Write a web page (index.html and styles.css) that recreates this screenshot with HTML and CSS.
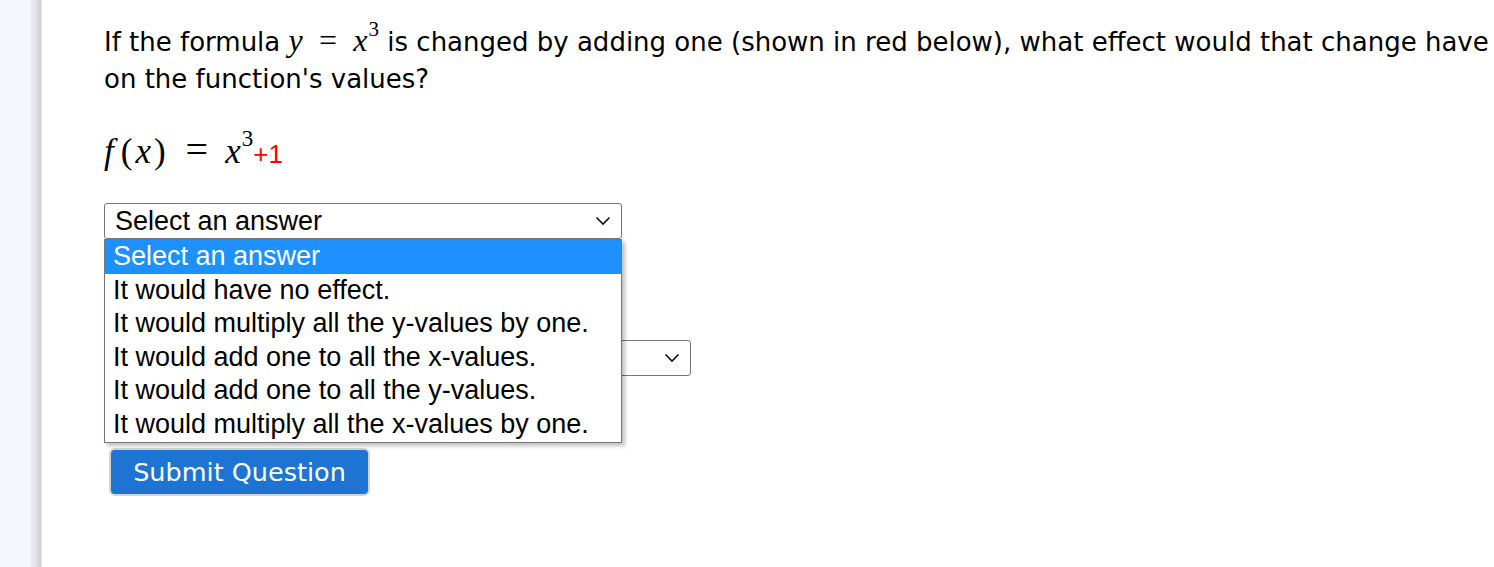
FILE: index.html
```html
<!DOCTYPE html>
<html lang="en">
<head>
    <meta charset="UTF-8">
    <meta name="viewport" content="width=device-width, initial-scale=1.0">
    <title>Question</title>
    <link rel="stylesheet" href="styles.css">
</head>
<body>
    <div class="page">
        <div class="sidebar"></div>
        <div class="main">
            <p class="question">
                <span class="line">If the formula <span class="math">y</span> <span class="op">=</span> <span class="math">x</span><sup class="sup">3</sup> is changed by adding one (shown in red below), what effect would that change have</span>
                <span class="line">on the function's values?</span>
            </p>
            <div class="formula"><span class="math fn">f</span><span class="paren">(</span><span class="math">x</span><span class="paren">)</span><span class="op eq">=</span><span class="math">x</span><sup class="sup">3</sup><span class="red">+1</span></div>

            <div class="select-wrap">
                <div class="select first">
                    <span>Select an answer</span>
                    <svg class="chev" width="16" height="10" viewBox="0 0 16 10"><path d="M1.5 1.5 L8 8 L14.5 1.5" fill="none" stroke="#111" stroke-width="1.6"/></svg>
                </div>
                <ul class="popup">
                    <li class="active">Select an answer</li>
                    <li>It would have no effect.</li>
                    <li>It would multiply all the y-values by one.</li>
                    <li>It would add one to all the x-values.</li>
                    <li>It would add one to all the y-values.</li>
                    <li>It would multiply all the x-values by one.</li>
                </ul>
            </div>

            <p class="hidden-line">How does the graph change?</p>
            <div class="select second">
                <span>Select an answer</span>
                <svg class="chev" width="16" height="10" viewBox="0 0 16 10"><path d="M1.5 1.5 L8 8 L14.5 1.5" fill="none" stroke="#111" stroke-width="1.6"/></svg>
            </div>

            <button class="submit">Submit Question</button>
        </div>
    </div>
</body>
</html>
```

FILE: styles.css
```css
body {
    margin: 0;
    background-color: white;
    color: black;
    font-family: "DejaVu Sans", Tahoma, sans-serif;
    overflow: hidden;
}
.page {
    display: flex;
    min-height: 567px;
}
.sidebar {
    width: 42px;
    flex-shrink: 0;
    background: linear-gradient(to right, #f5f6fd 0, #f5f6fd 30px, #ededf1 31px, #dedee2 37px, #cdcdd1 41px, #ffffff 42px);
}
.main {
    padding: 22px 0 0 62px;
    flex: 1;
}
.question {
    margin: 0;
    font-size: 26px;
    line-height: 37px;
}
.question .line {
    display: block;
    white-space: nowrap;
}
.math {
    font-family: "Liberation Serif", "DejaVu Serif", serif;
    font-style: italic;
    font-size: 32px;
}
.op {
    font-family: "Liberation Serif", serif;
    font-size: 32px;
    margin: 0 8px;
}
.sup {
    font-family: "Liberation Serif", serif;
    font-size: 21px;
    line-height: 0;
    vertical-align: 15px;
    margin-left: 1px;
}
.formula {
    margin-top: 31px;
    height: 42px;
    line-height: 42px;
    white-space: nowrap;
}
.formula .math,
.formula .paren,
.formula .op {
    font-size: 35px;
}
.formula .fn {
    margin-right: 4px;
}
.formula .paren {
    font-family: "Liberation Serif", serif;
    margin: 0 3px;
}
.formula .eq {
    font-size: 40px;
    margin: 0 17px 0 17px;
}
.formula .sup {
    font-size: 23px;
    vertical-align: 17px;
}
.red {
    color: #ff0000;
    font-family: "Liberation Sans", Arial, sans-serif;
    font-size: 26px;
}
.select-wrap {
    position: relative;
    margin-top: 32px;
    width: 518px;
}
.select {
    box-sizing: border-box;
    height: 36px;
    border: 1px solid #767676;
    border-radius: 3px;
    display: flex;
    align-items: center;
    justify-content: space-between;
    padding: 0 10px 0 10px;
    font-family: "Liberation Sans", Arial, sans-serif;
    font-size: 27px;
    background: white;
}
.first {
    width: 518px;
}
.second {
    width: 587px;
    margin-top: 36px;
}
.popup {
    position: absolute;
    top: 36px;
    left: 0;
    width: 518px;
    box-sizing: border-box;
    margin: 0;
    padding: 0;
    list-style: none;
    border: 1px solid #767676;
    background: white;
    box-shadow: 3px 3px 4px rgba(0, 0, 0, 0.25);
    font-family: "Liberation Sans", Arial, sans-serif;
    font-size: 27px;
    z-index: 2;
}
.popup li {
    height: 33.6px;
    line-height: 33px;
    padding-left: 8px;
    white-space: nowrap;
}
.popup .active {
    background-color: #1e90ff;
    color: white;
}
.hidden-line {
    margin: 28px 0 0 0;
    font-size: 26px;
    line-height: 37px;
    white-space: nowrap;
}
.submit {
    margin: 72px 0 0 5px;
    width: 261px;
    height: 48px;
    background-color: #1e74d2;
    color: white;
    border: 2px solid #d4d4d4;
    border-radius: 6px;
    font-family: "DejaVu Sans", Tahoma, sans-serif;
    font-size: 25.5px;
    padding: 0;
    cursor: pointer;
}
```
